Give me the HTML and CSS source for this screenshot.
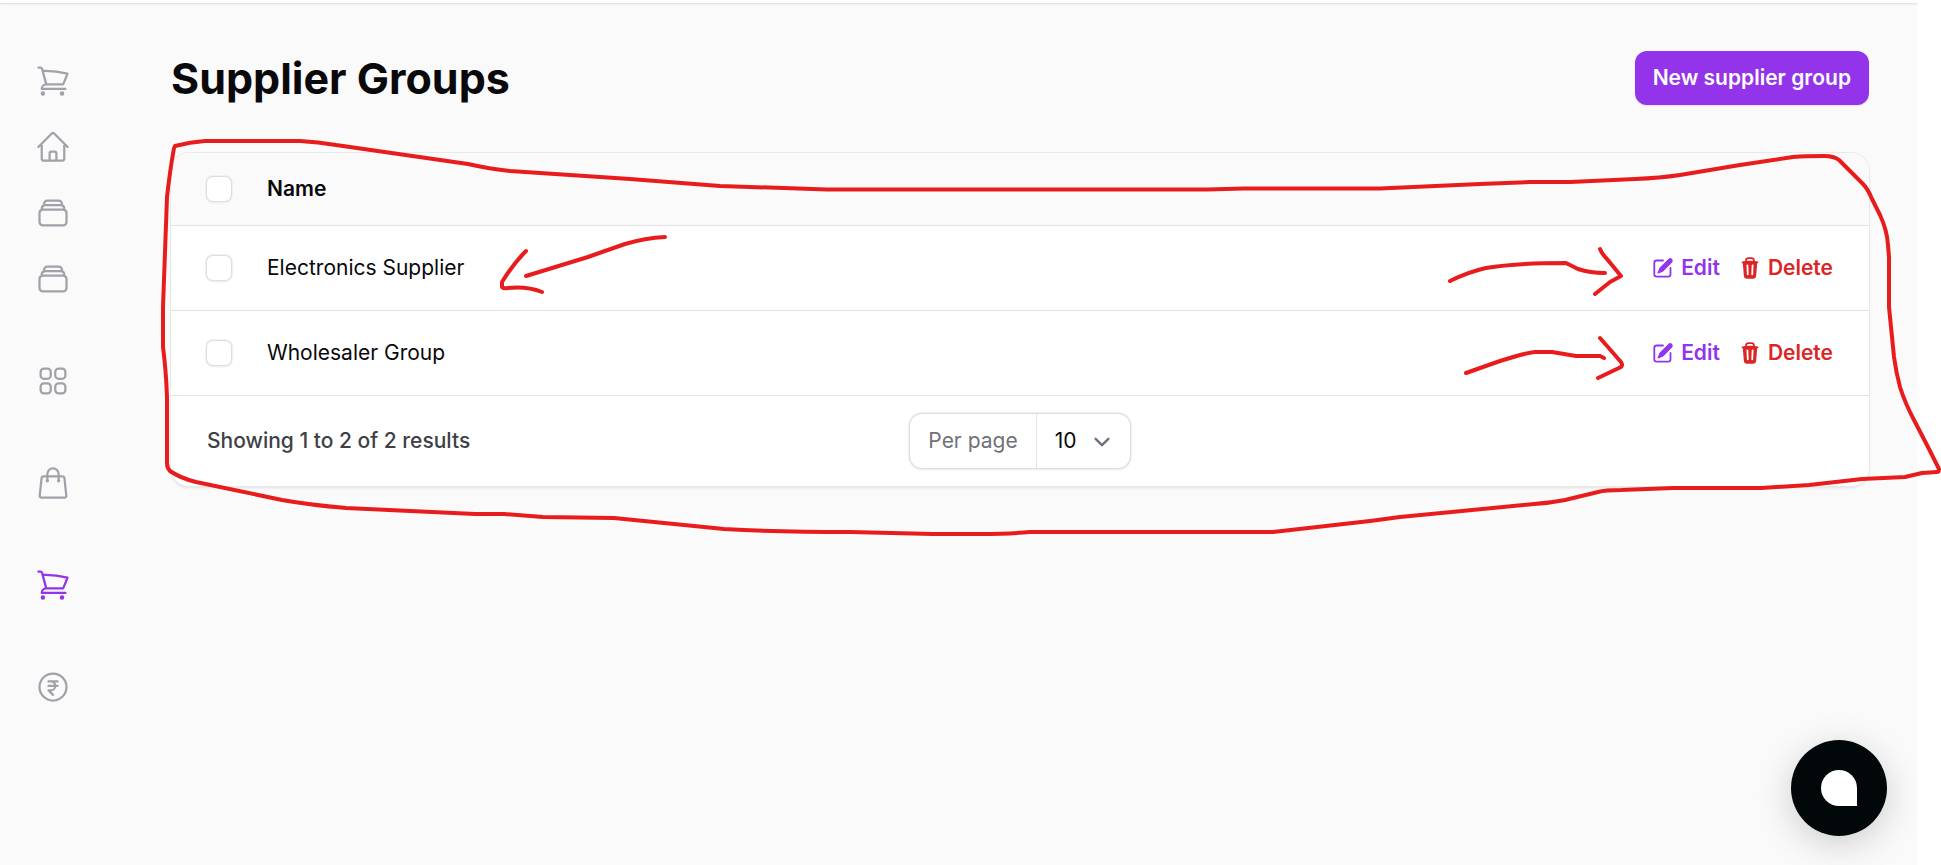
FILE: index.html
```html
<!DOCTYPE html>
<html lang="en">
  <head>
    <meta charset="utf-8">
    <title>Supplier Groups</title>
    <link rel="stylesheet" href="styles.css">
  </head>
  <body>
    <!-- shared icons -->
    <svg class="sprite" aria-hidden="true">
      <symbol id="cart" viewBox="0 0 24 24">
        <path d="M2.25 3h1.386c.51 0 .955.343 1.087.835l.383 1.437M7.5 14.25a3 3 0 0 0-3 3h15.75m-12.75-3h11.218c1.121-2.3 2.1-4.684 2.924-7.138a60.114 60.114 0 0 0-16.536-1.84M7.5 14.25 5.106 5.272M6 20.25a.75.75 0 1 1-1.5 0 .75.75 0 0 1 1.5 0Zm12.75 0a.75.75 0 1 1-1.5 0 .75.75 0 0 1 1.5 0Z"/>
      </symbol>
      <symbol id="stack" viewBox="0 0 24 24">
        <path d="M6 6.878V6a2.25 2.25 0 0 1 2.25-2.25h7.5A2.25 2.25 0 0 1 18 6v.878m-12 0c.235-.083.487-.128.75-.128h10.5c.263 0 .515.045.75.128m-12 0A2.25 2.25 0 0 0 4.5 9v.878m13.5-3A2.25 2.25 0 0 1 19.5 9v.878m0 0a2.246 2.246 0 0 0-.75-.128H5.25c-.263 0-.515.045-.75.128m15 0A2.25 2.25 0 0 1 21 12v6a2.25 2.25 0 0 1-2.25 2.25H5.25A2.25 2.25 0 0 1 3 18v-6c0-.98.626-1.813 1.5-2.122"/>
      </symbol>
      <symbol id="pencil" viewBox="0 0 20 20">
        <path d="m5.433 13.917 1.262-3.155A4 4 0 0 1 7.58 9.42l6.92-6.918a2.121 2.121 0 0 1 3 3l-6.92 6.918c-.383.383-.84.685-1.343.886l-3.154 1.262a.5.5 0 0 1-.65-.65Z"/>
        <path d="M3.5 5.75c0-.69.56-1.25 1.25-1.25H10A.75.75 0 0 0 10 3H4.75A2.75 2.75 0 0 0 2 5.75v9.5A2.75 2.75 0 0 0 4.75 18h9.5A2.75 2.75 0 0 0 17 15.25V10a.75.75 0 0 0-1.5 0v5.25c0 .69-.56 1.25-1.25 1.25h-9.5c-.69 0-1.25-.56-1.25-1.25v-9.5Z"/>
      </symbol>
      <symbol id="trash" viewBox="0 0 20 20">
        <path fill-rule="evenodd" d="M8.75 1A2.75 2.75 0 0 0 6 3.75v.443c-.795.077-1.584.176-2.365.298a.75.75 0 1 0 .23 1.482l.149-.022.841 10.518A2.75 2.75 0 0 0 7.596 19h4.807a2.75 2.75 0 0 0 2.742-2.53l.841-10.52.149.023a.75.75 0 0 0 .23-1.482A41.03 41.03 0 0 0 14 4.193V3.75A2.75 2.75 0 0 0 11.25 1h-2.5ZM10 4c.84 0 1.673.025 2.5.075V3.75c0-.69-.56-1.25-1.25-1.25h-2.5c-.69 0-1.25.56-1.25 1.25v.325C8.327 4.025 9.16 4 10 4ZM8.58 7.72a.75.75 0 0 0-1.5.06l.3 7.5a.75.75 0 1 0 1.5-.06l-.3-7.5Zm4.34.06a.75.75 0 1 0-1.5-.06l-.3 7.5a.75.75 0 1 0 1.5.06l.3-7.5Z"/>
      </symbol>
    </svg>

    <div class="topbar"></div>

    <div class="layout">
      <nav class="sidebar" aria-label="Main">
        <div class="nav-group">
          <a href="#" class="nav-item" aria-label="Point of sale"><svg><use href="#cart"/></svg></a>
          <a href="#" class="nav-item" aria-label="Dashboard">
            <svg viewBox="0 0 24 24"><path d="m2.25 12 8.954-8.955c.44-.439 1.152-.439 1.591 0L21.75 12M4.5 9.75v10.125c0 .621.504 1.125 1.125 1.125H9.75v-4.875c0-.621.504-1.125 1.125-1.125h2.25c.621 0 1.125.504 1.125 1.125V21h4.125c.621 0 1.125-.504 1.125-1.125V9.75M8.25 21h8.25"/></svg>
          </a>
          <a href="#" class="nav-item" aria-label="Brands"><svg><use href="#stack"/></svg></a>
          <a href="#" class="nav-item" aria-label="Categories"><svg><use href="#stack"/></svg></a>
        </div>
        <div class="nav-group">
          <button type="button" class="nav-item" aria-label="Products">
            <svg viewBox="0 0 24 24">
              <rect x="3.75" y="3.75" width="6.75" height="6.75" rx="2.25"/>
              <rect x="13.5" y="3.75" width="6.75" height="6.75" rx="2.25"/>
              <rect x="3.75" y="13.5" width="6.75" height="6.75" rx="2.25"/>
              <rect x="13.5" y="13.5" width="6.75" height="6.75" rx="2.25"/>
            </svg>
          </button>
        </div>
        <div class="nav-group">
          <button type="button" class="nav-item" aria-label="Sales">
            <svg viewBox="0 0 24 24"><path d="M15.75 10.5V6a3.75 3.75 0 1 0-7.5 0v4.5m11.356-1.993 1.263 12c.07.665-.45 1.243-1.119 1.243H4.25a1.125 1.125 0 0 1-1.12-1.243l1.264-12A1.125 1.125 0 0 1 5.513 7.5h12.974c.576 0 1.059.435 1.119 1.007ZM8.625 10.5a.375.375 0 1 1-.75 0 .375.375 0 0 1 .75 0Zm7.5 0a.375.375 0 1 1-.75 0 .375.375 0 0 1 .75 0Z"/></svg>
          </button>
        </div>
        <div class="nav-group">
          <button type="button" class="nav-item active" aria-label="Purchases"><svg><use href="#cart"/></svg></button>
        </div>
        <div class="nav-group">
          <button type="button" class="nav-item" aria-label="Expenses">
            <svg viewBox="0 0 24 24"><path d="M15 8.25H9m6 3H9m3 6-3-3h1.5a3 3 0 1 0 0-6M21 12a9 9 0 1 1-18 0 9 9 0 0 1 18 0Z"/></svg>
          </button>
        </div>
      </nav>

      <main class="content">
        <header class="page-header">
          <h1>Supplier Groups</h1>
          <button type="button" class="btn-primary">New supplier group</button>
        </header>

        <section class="card">
          <table class="groups">
            <thead>
              <tr>
                <th class="check"><input type="checkbox" aria-label="Select all"></th>
                <th>Name</th>
                <th></th>
              </tr>
            </thead>
            <tbody>
              <tr>
                <td class="check"><input type="checkbox" aria-label="Select Electronics Supplier"></td>
                <td>Electronics Supplier</td>
                <td>
                  <div class="actions">
                    <a href="#" class="edit"><svg><use href="#pencil"/></svg>Edit</a>
                    <button type="button" class="delete"><svg><use href="#trash"/></svg>Delete</button>
                  </div>
                </td>
              </tr>
              <tr>
                <td class="check"><input type="checkbox" aria-label="Select Wholesaler Group"></td>
                <td>Wholesaler Group</td>
                <td>
                  <div class="actions">
                    <a href="#" class="edit"><svg><use href="#pencil"/></svg>Edit</a>
                    <button type="button" class="delete"><svg><use href="#trash"/></svg>Delete</button>
                  </div>
                </td>
              </tr>
            </tbody>
          </table>

          <div class="pagination">
            <span class="overview">Showing 1 to 2 of 2 results</span>
            <div class="per-page">
              <label for="per-page">Per page</label>
              <div class="select-wrap">
                <select id="per-page">
                  <option>5</option>
                  <option selected>10</option>
                  <option>25</option>
                  <option>50</option>
                </select>
                <svg class="chevron" viewBox="0 0 20 20"><path d="m6 8 4 4 4-4"/></svg>
              </div>
            </div>
          </div>
        </section>
      </main>
    </div>

    <button type="button" class="chat" aria-label="Open chat"><span class="bubble"></span></button>

    <!-- red pen marks over the page -->
    <svg class="marks" viewBox="0 0 1941 865" aria-hidden="true">
      <path d="M175 146Q190 142 205 141H300Q318 142 336 145L468 164Q490 169 510 171L630 179 720 186 827 189.500H1207L1244 188.500H1380L1480 184 1530 182H1570L1635 179Q1660 178 1680 175L1740 165 1793 157Q1805 156 1824 156 1834 156 1839 160L1851 172 1863 184Q1868 189 1872 199L1880 215Q1887 230 1888 245L1889 257V307L1894 357Q1896 372 1900 387 1905 403 1914 420L1928 447 1939 469Q1939 472 1937 472L1922 473 1905 477 1862 479 1809 485 1761 488H1673L1621 490Q1605 490 1598 492L1565 500Q1550 503 1534 504L1400 517 1370 521 1273 532H1030Q1010 534 980 534H933L850 532Q780 532 724 529L614 518 543 517 504 514H475L346 508Q310 505 282 500L196 482Q180 478 170 471 167 468 167 463V397Q166 370 163 347V307L167 197Q170 170 174 148"/>
      <path d="M526 251Q513 264 502 282V287Q504 289 508 288 527 286 542 292M665 237Q645 238 625 244L588 257 526 276"/>
      <path d="M1450 281Q1468 272 1486 268 1515 263 1566 263L1578 269Q1590 273 1605 273M1600 249Q1602 254 1607 259L1621 276 1610 282 1595 294"/>
      <path d="M1466 373 1500 361Q1525 353 1535 352H1552L1576 356H1600L1604 358M1600 338 1621 362Q1623 365 1621 367L1598 378"/>
    </svg>
  </body>
</html>
```
FILE: styles.css
```css
* {
  box-sizing: border-box;
}

body {
  margin: 0;
  min-height: 100vh;
  padding-right: 24px;
  display: flex;
  flex-direction: column;
  font-family: Inter, "Liberation Sans", sans-serif;
  font-size: 21px;
  line-height: 30px;
  color: #09090b;
  background-color: #fff;
}

button,
select {
  font: inherit;
  color: inherit;
  background: none;
  border: none;
  padding: 0;
  margin: 0;
  cursor: pointer;
}

.sprite {
  position: absolute;
  width: 0;
  height: 0;
}

.topbar {
  height: 4px;
  background-color: #fff;
  border-bottom: 1px solid #e4e4e7;
  box-shadow: 0 1px 2px rgba(0, 0, 0, 0.05);
  z-index: 1;
}

.layout {
  flex: 1;
  display: flex;
  background-color: #fafafa;
}

/* sidebar */
.sidebar {
  width: 123px;
  padding: 47px 23px;
  display: flex;
  flex-direction: column;
  gap: 42px;
}

.nav-group {
  display: flex;
  flex-direction: column;
  align-items: flex-start;
  gap: 6px;
}

.nav-item {
  display: flex;
  padding: 12px;
  color: #a1a1aa;
}

.nav-item.active {
  color: #9333ea;
}

.nav-item svg {
  width: 36px;
  height: 36px;
  fill: none;
  stroke: currentColor;
  stroke-width: 1.5;
  stroke-linecap: round;
  stroke-linejoin: round;
}

/* page */
.content {
  flex: 1;
  padding: 47px 48px;
}

.page-header {
  display: flex;
  justify-content: space-between;
  align-items: center;
  margin-bottom: 48px;
}

h1 {
  margin: 0;
  font-size: 43px;
  line-height: 54px;
  font-weight: 700;
}

.btn-primary {
  padding: 12px 18px;
  border-radius: 12px;
  background-color: #9333ea;
  color: #fff;
  font-weight: 600;
  box-shadow: 0 1px 2px rgba(0, 0, 0, 0.1);
}

.card {
  background-color: #fff;
  border-radius: 18px;
  overflow: hidden;
  box-shadow: 0 0 0 1px #e9e9ea, 0 2px 3px rgba(0, 0, 0, 0.1);
}

.groups {
  width: 100%;
  border-collapse: collapse;
}

.groups tr {
  border-bottom: 1px solid #e4e4e7;
}

.groups th {
  height: 72px;
  padding: 0 36px 0 0;
  text-align: left;
  font-weight: 600;
  background-color: #fafafa;
}

.groups td {
  height: 85px;
  padding: 0 36px 0 0;
}

.groups .check {
  width: 96px;
  padding: 0 36px;
}

input[type="checkbox"] {
  appearance: none;
  display: block;
  width: 24px;
  height: 24px;
  margin: 0;
  border-radius: 6px;
  background-color: #fff;
  box-shadow: 0 0 0 1px #dedee0, 0 0 0 2px #f1f1f2, 0 2px 2px rgba(0, 0, 0, 0.08);
}

input[type="checkbox"]:checked {
  background-color: #9333ea;
}

.actions {
  display: flex;
  justify-content: flex-end;
  gap: 18px;
}

.actions a,
.actions button {
  display: flex;
  align-items: center;
  gap: 6px;
  font-weight: 600;
  text-decoration: none;
}

.actions svg {
  width: 24px;
  height: 24px;
  fill: currentColor;
}

.edit {
  color: #9333ea;
}

.actions .delete {
  color: #dc2626;
}

.pagination {
  display: grid;
  grid-template-columns: 1fr auto 1fr;
  align-items: center;
  padding: 18px 36px;
}

.overview {
  font-weight: 500;
  color: #3f3f46;
}

.per-page {
  display: flex;
  border-radius: 12px;
  box-shadow: 0 0 0 1px #dedee0, 0 0 0 2px #f1f1f2, 0 2px 2px rgba(0, 0, 0, 0.08);
}

.per-page label {
  padding: 12px 18px;
  color: #71717a;
  border-right: 1px solid #e4e4e7;
}

.select-wrap {
  position: relative;
}

.per-page select {
  appearance: none;
  height: 54px;
  padding: 0 48px 0 18px;
}

.chevron {
  position: absolute;
  right: 12px;
  top: 12px;
  width: 32px;
  height: 32px;
  fill: none;
  stroke: #6b7280;
  stroke-width: 1.5;
  stroke-linecap: round;
  stroke-linejoin: round;
  pointer-events: none;
}

/* chat launcher */
.chat {
  position: fixed;
  right: 54px;
  bottom: 29px;
  width: 96px;
  height: 96px;
  display: flex;
  justify-content: center;
  align-items: center;
  border-radius: 50%;
  background-color: #020809;
  box-shadow: 0 8px 36px rgba(0, 0, 0, 0.18);
}

.bubble {
  width: 36px;
  height: 36px;
  border-radius: 50% 50% 0 50%;
  background-color: #fff;
}

.marks {
  position: absolute;
  top: 0;
  left: 0;
  width: 100%;
  fill: none;
  stroke: #e81c1c;
  stroke-width: 4;
  stroke-linecap: round;
  stroke-linejoin: round;
  pointer-events: none;
}
```
